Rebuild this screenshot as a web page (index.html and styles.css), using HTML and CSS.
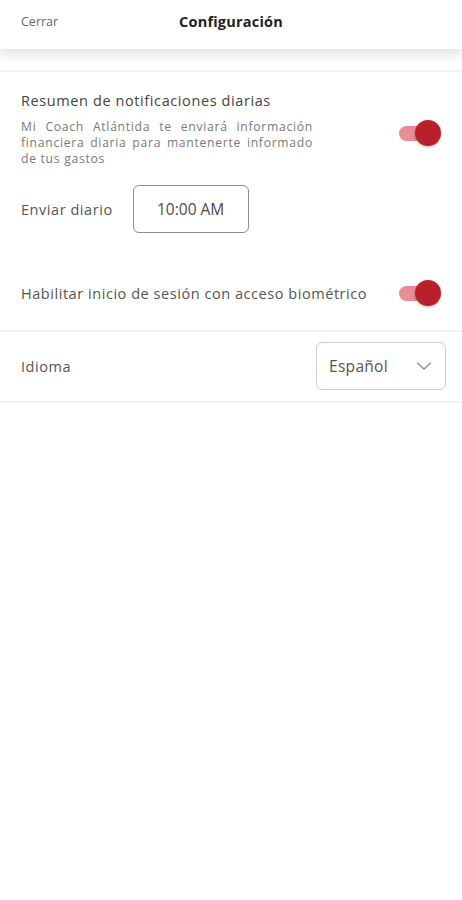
FILE: index.html
```html
<!DOCTYPE html>
<html lang="es">
<head>
    <meta charset="UTF-8">
    <meta name="viewport" content="width=device-width, initial-scale=1.0">
    <title>Configuración</title>
    <link rel="stylesheet" href="styles.css">
</head>
<body>

    <div class="header">
        <span class="close">Cerrar</span>
        <h1 class="title">Configuración</h1>
        <span></span>
    </div>

    <div class="settings">
        <div class="section notif">
            <div class="notif-row">
                <div class="notif-text">
                    <h2 class="label-title">Resumen de notificaciones diarias</h2>
                    <p class="desc">Mi Coach Atlántida te enviará información financiera diaria para mantenerte informado de tus gastos</p>
                </div>
                <div class="toggle on notif-toggle"><span class="knob"></span></div>
            </div>

            <div class="time-row">
                <span class="label">Enviar diario</span>
                <div class="time-box">10:00 AM</div>
            </div>

            <div class="bio-row">
                <span class="label">Habilitar inicio de sesión con acceso biométrico</span>
                <div class="toggle on"><span class="knob"></span></div>
            </div>
        </div>

        <div class="section lang-row">
            <span class="label">Idioma</span>
            <div class="select">
                <span>Español</span>
                <svg width="16" height="10" viewBox="0 0 16 10">
                    <path d="M1 1.5 L8 8 L15 1.5" fill="none" stroke="#8a8a8a" stroke-width="1.3"/>
                </svg>
            </div>
        </div>
    </div>

</body>
</html>
```

FILE: styles.css
```css
body {
    font-family: "Open Sans", "Noto Sans", Arial, sans-serif;
    background-color: #fff;
    margin: 0;
    color: #555;
}
.header {
    height: 49px;
    display: grid;
    grid-template-columns: 1fr auto 1fr;
    align-items: center;
    padding: 0 21px;
    background: #fff;
    box-shadow: 0 5px 12px rgba(0, 0, 0, 0.13);
    position: relative;
}
.close {
    font-size: 12.5px;
    color: #666;
    margin-top: -6px;
}
.title {
    margin: -6px 0 0;
    font-size: 14.5px;
    font-weight: 700;
    color: #222;
    letter-spacing: 0.2px;
}
.settings {
    margin-top: 21px;
    border-top: 2px solid #f1f1f1;
}
.section {
    border-bottom: 2px solid #f1f1f1;
    padding: 0 21px;
}
.notif {
    padding-top: 19px;
    padding-bottom: 24px;
}
.notif-row {
    display: flex;
    justify-content: space-between;
    align-items: center;
}
.notif-text {
    width: 292px;
}
.notif-toggle {
    margin-top: 8px;
}
.label-title {
    margin: 0;
    font-size: 14.5px;
    font-weight: 400;
    line-height: 20px;
    color: #444;
    letter-spacing: 0.6px;
}
.desc {
    margin: 8px 0 0;
    font-size: 12.2px;
    line-height: 16px;
    color: #7a7a7a;
    text-align: justify;
    letter-spacing: 0.7px;
}
.label {
    font-size: 14.5px;
    color: #555;
    letter-spacing: 0.55px;
}
.time-row {
    display: flex;
    align-items: center;
    gap: 20px;
    margin-top: 18px;
}
.time-box {
    width: 114px;
    height: 46px;
    border: 1px solid #8d8d8d;
    border-radius: 6px;
    display: flex;
    align-items: center;
    justify-content: center;
    font-size: 15.5px;
    color: #4a4a4a;
}
.bio-row {
    display: flex;
    justify-content: space-between;
    align-items: center;
    margin-top: 47px;
}
.toggle {
    width: 42px;
    height: 26px;
    position: relative;
    flex-shrink: 0;
}
.toggle::before {
    content: "";
    position: absolute;
    left: 0;
    top: 6px;
    width: 36px;
    height: 15px;
    border-radius: 8px;
    background: #e68d97;
}
.knob {
    position: absolute;
    right: 0;
    top: 0;
    width: 26px;
    height: 26px;
    border-radius: 50%;
    background: #b9202a;
    box-shadow: 0 1px 3px rgba(0, 0, 0, 0.3);
}
.lang-row {
    display: flex;
    justify-content: space-between;
    align-items: center;
    padding-top: 10px;
    padding-bottom: 11px;
    padding-right: 16px;
}
.select {
    width: 103px;
    height: 46px;
    border: 1px solid #cfcfcf;
    border-radius: 6px;
    display: flex;
    align-items: center;
    justify-content: space-between;
    padding: 0 13px 0 12px;
    font-size: 15.5px;
    color: #555;
    letter-spacing: 0.3px;
}
```
